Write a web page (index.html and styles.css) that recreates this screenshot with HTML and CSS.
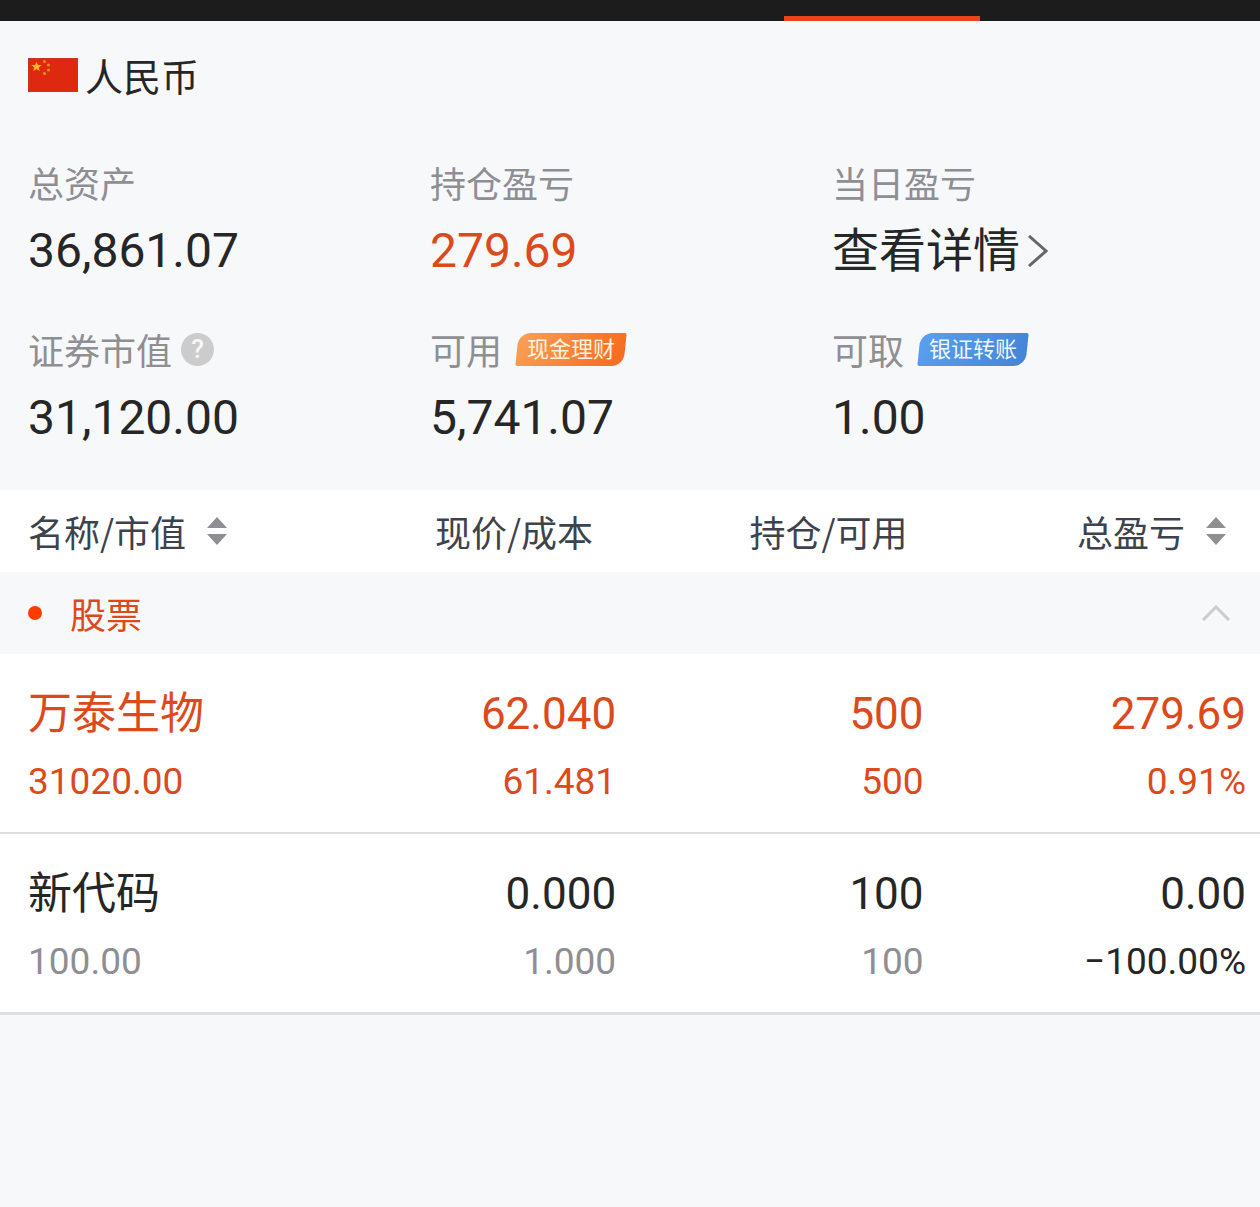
FILE: index.html
```html
<!DOCTYPE html>
<html lang="zh-CN">
<head>
  <meta charset="UTF-8" />
  <meta name="viewport" content="width=device-width, initial-scale=1.0"/>
  <title>持仓</title>
  <link rel="stylesheet" href="styles.css">
</head>

<body>
  <div class="tab-bar">
    <div class="tab-line"></div>
  </div>

  <section class="account">
    <h1 class="currency">
      <svg class="flag" viewBox="0 0 50 34" aria-hidden="true">
        <rect width="50" height="34" fill="#de2910"/>
        <rect x="0.5" y="0.5" width="49" height="33" fill="none" stroke="#b5402c" stroke-opacity="0.6"/>
        <path fill="#ffb81f" d="M8.5 3.500l1.400 3.600h3.900l-3.100 2.300 1.200 3.700-3.400-2.200-3.400 2.200 1.200-3.700L3.200 7.100h3.900z"/>
        <g fill="#f08a1c">
          <circle cx="16.500" cy="3.500" r="1.600"/>
          <circle cx="20.500" cy="7" r="1.600"/>
          <circle cx="20.500" cy="12" r="1.600"/>
          <circle cx="16.500" cy="15.500" r="1.600"/>
        </g>
      </svg>
      <span>人民币</span>
    </h1>

    <dl class="summary">
      <div class="item">
        <dt>总资产</dt>
        <dd>36,861.07</dd>
      </div>
      <div class="item">
        <dt>持仓盈亏</dt>
        <dd class="up">279.69</dd>
      </div>
      <div class="item">
        <dt>当日盈亏</dt>
        <dd>
          <a class="detail" href="#detail">查看详情<svg class="arrow" viewBox="0 0 20 32" aria-hidden="true"><path d="M1 1l17 15L1 31"/></svg></a>
        </dd>
      </div>
      <div class="item">
        <dt>证券市值
          <button class="help" type="button" aria-label="证券市值说明">?</button>
        </dt>
        <dd>31,120.00</dd>
      </div>
      <div class="item">
        <dt>可用 <a class="badge orange" href="#cash">现金理财</a></dt>
        <dd>5,741.07</dd>
      </div>
      <div class="item">
        <dt>可取 <a class="badge blue" href="#transfer">银证转账</a></dt>
        <dd>1.00</dd>
      </div>
    </dl>
  </section>

  <table class="holdings">
    <thead>
      <tr>
        <th class="name" scope="col">
          <button class="sort" type="button">名称/市值<svg viewBox="0 0 20 28" aria-hidden="true"><path d="M10 0l10 11H0zM0 17h20L10 28z"/></svg></button>
        </th>
        <th class="price" scope="col">现价/成本</th>
        <th class="amount" scope="col">持仓/可用</th>
        <th class="profit" scope="col">
          <button class="sort" type="button">总盈亏<svg viewBox="0 0 20 28" aria-hidden="true"><path d="M10 0l10 11H0zM0 17h20L10 28z"/></svg></button>
        </th>
      </tr>
    </thead>
    <tbody>
      <tr class="group">
        <th colspan="4" scope="rowgroup">
          <button class="toggle" type="button" aria-expanded="true">
            <span class="dot"></span>
            <span>股票</span>
            <svg class="fold" viewBox="0 0 28 16" aria-hidden="true"><path d="M1 15L14 2l13 13"/></svg>
          </button>
        </th>
      </tr>
      <tr class="stock up">
        <td><div class="main">万泰生物</div><div class="sub">31020.00</div></td>
        <td><div class="main">62.040</div><div class="sub">61.481</div></td>
        <td><div class="main">500</div><div class="sub">500</div></td>
        <td><div class="main">279.69</div><div class="sub">0.91%</div></td>
      </tr>
      <tr class="stock">
        <td><div class="main">新代码</div><div class="sub">100.00</div></td>
        <td><div class="main">0.000</div><div class="sub">1.000</div></td>
        <td><div class="main">100</div><div class="sub">100</div></td>
        <td><div class="main">0.00</div><div class="sub rate">−100.00%</div></td>
      </tr>
    </tbody>
  </table>
</body>
</html>
```
FILE: styles.css
```css
* {
  box-sizing: border-box;
}

body {
  margin: 0;
  font-family: Roboto, "Noto Sans CJK SC", sans-serif;
  background: #f7f8fa;
  color: #262626;
}

button {
  padding: 0;
  border: none;
  background: none;
  color: inherit;
  font: inherit;
  cursor: pointer;
}

a {
  color: inherit;
  text-decoration: none;
}

.tab-bar {
  display: flex;
  align-items: flex-end;
  height: 21px;
  background: #1c1c1c;
}

.tab-line {
  width: 15.6%;
  height: 5px;
  margin-left: 62.2%;
  background: #e8451b;
}

/* account summary */
.account {
  padding: 26px 26px 42px 28px;
}

.currency {
  display: flex;
  align-items: center;
  gap: 7px;
  margin: 0 0 55px;
  font-family: "Noto Sans CJK SC", sans-serif;
  font-size: 38px;
  font-weight: 400;
  line-height: 56px;
}

.flag {
  width: 50px;
  height: 34px;
}

.summary {
  display: grid;
  grid-template-columns: repeat(3, 1fr);
  row-gap: 44px;
  margin: 0;
}

.item dt {
  display: flex;
  align-items: center;
  margin-bottom: 15px;
  color: #8e8e93;
  font-family: "Noto Sans CJK SC", sans-serif;
  font-size: 36px;
  line-height: 48px;
}

.item dd {
  margin: 0;
  font-size: 48px;
  line-height: 60px;
}

.item .up,
.stock.up,
.stock.up .sub {
  color: #dc4a1c;
}

.detail {
  display: flex;
  align-items: center;
  gap: 8px;
  font-size: 47px;
}

.arrow {
  width: 20px;
  height: 32px;
  fill: none;
  stroke: #666;
  stroke-width: 3;
}

.help {
  width: 33px;
  height: 33px;
  margin-left: 9px;
  border-radius: 50%;
  background: #ccc;
  color: #f7f8fa;
  font-family: Roboto, sans-serif;
  font-size: 26px;
  font-weight: 500;
  line-height: 33px;
}

.badge {
  position: relative;
  z-index: 0;
  width: 112px;
  margin-left: 13px;
  color: #fff3e0;
  font-family: Roboto, "Noto Sans CJK SC", sans-serif;
  font-size: 22px;
  line-height: 33px;
  text-align: center;
}

/* slanted plate behind the badge text */
.badge::before {
  content: "";
  position: absolute;
  inset: 0 2px;
  z-index: -1;
  border-radius: 12px 2px;
  transform: skewX(-6deg);
}

.orange::before {
  background: linear-gradient(110deg, #f9a055, #f76a1c);
}

.blue {
  color: #f0f7ff;
}

.blue::before {
  background: linear-gradient(110deg, #5a9ff0, #4384d6);
}

/* holdings table */
.holdings {
  width: 100%;
  table-layout: fixed;
  border-collapse: collapse;
  background: #fff;
}

.holdings th {
  height: 82px;
  padding: 0;
  color: #3d434d;
  font-family: "Noto Sans CJK SC", sans-serif;
  font-size: 36px;
  font-weight: 400;
  line-height: 48px;
  text-align: right;
}

.holdings .name {
  width: 24.5%;
  padding-left: 28px;
  text-align: left;
}

.holdings .price {
  width: 24.4%;
  padding-right: 23px;
}

.holdings .amount {
  width: 24.4%;
  padding-right: 16px;
}

.holdings .profit {
  padding-right: 34px;
}

.sort {
  display: flex;
  align-items: center;
  gap: 21px;
}

.profit .sort {
  margin-left: auto;
}

.sort svg {
  width: 20px;
  height: 28px;
  fill: #8e8e93;
}

.holdings .group th {
  background: #f7f8fa;
  color: #dc4a1c;
}

.toggle {
  display: flex;
  align-items: center;
  gap: 28px;
  width: 100%;
  padding: 0 30px 0 28px;
}

.dot {
  width: 14px;
  height: 14px;
  border-radius: 50%;
  background: #ff3c00;
}

.fold {
  width: 28px;
  height: 16px;
  margin-left: auto;
  fill: none;
  stroke: #ccc;
  stroke-width: 3;
}

.stock td {
  padding: 32px 0 26px;
  border-bottom: 2px solid #dedfe1;
  text-align: right;
}

.stock:last-child td {
  border-bottom-width: 3px;
}

.stock td:first-child {
  padding-left: 28px;
  text-align: left;
}

.stock td:last-child {
  padding-right: 14px;
}

.main {
  margin-bottom: 16px;
  font-size: 44px;
  line-height: 56px;
}

.sub {
  color: #8e8e93;
  font-size: 37px;
  line-height: 48px;
}

.stock .rate {
  color: #262626;
}
```
